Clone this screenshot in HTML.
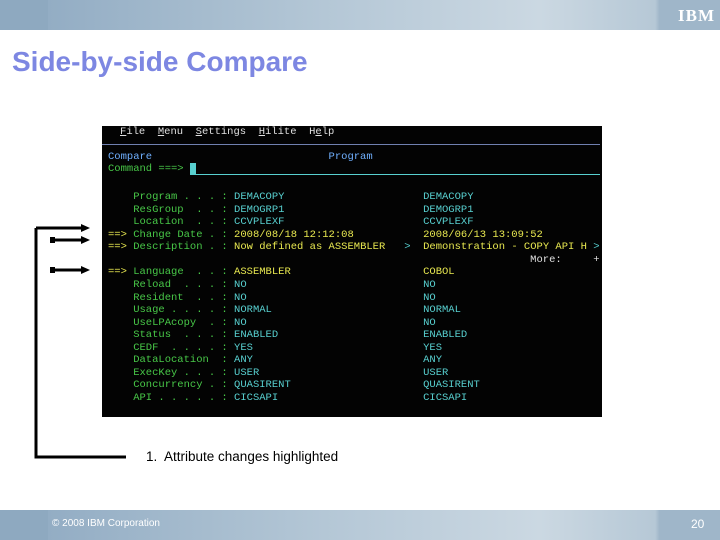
<!DOCTYPE html>
<html><head><style>
body{margin:0;width:720px;height:540px;position:relative;background:#fff;overflow:hidden;font-family:"Liberation Sans",sans-serif}
.bar{position:absolute;left:0;width:720px;height:30px;background:linear-gradient(90deg,#8ea9c0 0,#8ea9c0 48px,#93adc4 48px,#b4c7d6 45%,#cbd8e2 75%,#b6c8d6 91%,#9fb6c9 91.6%,#9fb6c9 100%)}
.term{position:absolute;left:102px;top:126px;width:500px;height:291px;background:#030303}
pre{position:absolute;margin:0;font-family:"Liberation Mono",monospace;font-size:10.5px;line-height:12.56px;white-space:pre;left:108px}
.g{color:#48c848}.c{color:#58d0d0}.y{color:#e8e850}.w{color:#e0e0e0}.b{color:#70b0ff}
</style></head><body>
<div class="bar" style="top:0"></div>
<div style="position:absolute;right:5px;top:6px;color:#fff;font:bold 17px 'Liberation Serif',serif;letter-spacing:1px">IBM</div>
<div style="position:absolute;left:12px;top:46px;font-size:28px;font-weight:bold;color:#7d87e2">Side-by-side Compare</div>
<div class="term"></div>
<pre class="w" style="left:120px;top:126px"><u>F</u>ile  <u>M</u>enu  <u>S</u>ettings  <u>H</u>ilite  H<u>e</u>lp</pre>
<div style="position:absolute;left:102px;top:144px;width:498px;height:1px;background:#7080b0"></div>
<pre style="top:151px"><span class="b">Compare</span>                            <span class="b">Program</span></pre>
<pre style="top:163px"><span class="g">Command ===&gt;</span> <span style="background:#58d0d0"> </span></pre>
<div style="position:absolute;left:190px;top:174px;width:410px;height:1px;background:#58d0d0"></div>
<pre style="top:191px"><span class="g">    Program . . . :</span> <span class="c">DEMACOPY</span>                      <span class="c">DEMACOPY</span>
<span class="g">    ResGroup  . . :</span> <span class="c">DEMOGRP1</span>                      <span class="c">DEMOGRP1</span>
<span class="g">    Location  . . :</span> <span class="c">CCVPLEXF</span>                      <span class="c">CCVPLEXF</span>
<span class="y">==&gt;</span> <span class="g">Change Date . :</span> <span class="y">2008/08/18 12:12:08</span>           <span class="y">2008/06/13 13:09:52</span>
<span class="y">==&gt;</span> <span class="g">Description . :</span> <span class="y">Now defined as ASSEMBLER</span>   <span class="c">&gt;</span>  <span class="y">Demonstration - COPY API H</span> <span class="c">&gt;</span>
                                                                   <span class="w">More:</span>     <span class="w">+</span>
<span class="y">==&gt;</span> <span class="g">Language  . . :</span> <span class="y">ASSEMBLER</span>                     <span class="y">COBOL</span>
<span class="g">    Reload  . . . :</span> <span class="c">NO</span>                            <span class="c">NO</span>
<span class="g">    Resident  . . :</span> <span class="c">NO</span>                            <span class="c">NO</span>
<span class="g">    Usage . . . . :</span> <span class="c">NORMAL</span>                        <span class="c">NORMAL</span>
<span class="g">    UseLPAcopy  . :</span> <span class="c">NO</span>                            <span class="c">NO</span>
<span class="g">    Status  . . . :</span> <span class="c">ENABLED</span>                       <span class="c">ENABLED</span>
<span class="g">    CEDF  . . . . :</span> <span class="c">YES</span>                           <span class="c">YES</span>
<span class="g">    DataLocation  :</span> <span class="c">ANY</span>                           <span class="c">ANY</span>
<span class="g">    ExecKey . . . :</span> <span class="c">USER</span>                          <span class="c">USER</span>
<span class="g">    Concurrency . :</span> <span class="c">QUASIRENT</span>                     <span class="c">QUASIRENT</span>
<span class="g">    API . . . . . :</span> <span class="c">CICSAPI</span>                       <span class="c">CICSAPI</span></pre>
<svg style="position:absolute;left:0;top:0" width="720" height="540">
<g stroke="#000" stroke-width="3" fill="none">
<path d="M36 228V457H126"/><path d="M36 228H82"/><path d="M52 240H82"/><path d="M52 270H82"/>
</g>
<g fill="#000"><path d="M81 224L90 228L81 232Z"/><path d="M81 236L90 240L81 244Z"/><path d="M81 266L90 270L81 274Z"/>
<rect x="50" y="237" width="5" height="6"/><rect x="50" y="267" width="5" height="6"/></g>
</svg>
<div style="position:absolute;left:146px;top:449px;font-size:13.5px;color:#000">1.&nbsp; Attribute changes highlighted</div>
<div class="bar" style="top:510px"></div>
<div style="position:absolute;left:52px;top:518px;font-size:10px;color:#fff">© 2008 IBM Corporation</div>
<div style="position:absolute;left:691px;top:517px;font-size:12px;color:#fff">20</div>
</body></html>
